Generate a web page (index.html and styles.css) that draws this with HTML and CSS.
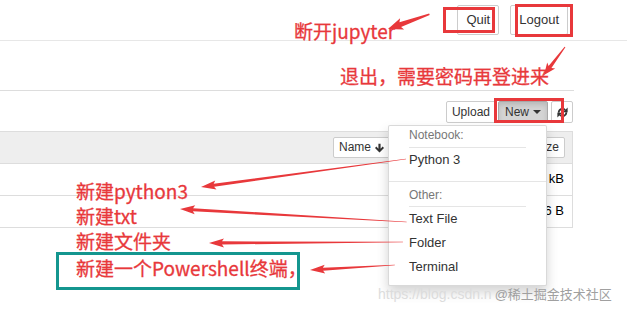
FILE: index.html
```html
<!DOCTYPE html>
<html lang="zh-CN">
<head>
    <meta charset="UTF-8">
    <meta name="viewport" content="width=device-width, initial-scale=1.0">
    <title>Jupyter - Home</title>
    <link rel="stylesheet" href="styles.css">
</head>
<body>
<div class="page">
    <!-- Top header -->
    <header class="topbar">
        <button class="btn">Quit</button>
        <button class="btn">Logout</button>
    </header>

    <!-- File tree -->
    <main class="tree">
        <div class="tabs"></div>

        <div class="toolbar">
            <button class="btn btn-xs upload-btn">Upload</button>
            <div class="btn-group">
                <button class="btn btn-xs btn-active">New <span class="caret"></span></button>
                <button class="btn btn-xs btn-icon">
                    <svg width="11" height="11" viewBox="0 0 12 12">
                        <path d="M1.8 6.2A4.2 4.2 0 0 1 9 3.3" fill="none" stroke="#333" stroke-width="1.9"/>
                        <polygon points="11.6,0.6 11.6,5.6 6.6,5.6" fill="#333"/>
                        <path d="M10.2 5.8A4.2 4.2 0 0 1 3 8.7" fill="none" stroke="#333" stroke-width="1.9"/>
                        <polygon points="0.4,11.4 0.4,6.4 5.4,6.4" fill="#333"/>
                    </svg>
                </button>
            </div>
        </div>

        <div class="file-list">
            <div class="list-head">
                <button class="btn btn-xs sort-btn">Name
                    <svg width="9" height="10" viewBox="0 0 10 10">
                        <path d="M3.8 0.4h2.4v5.3l2.3-2.3 1.5 1.5L5 9.9 0 4.9l1.5-1.5 2.3 2.3z" fill="#333"/>
                    </svg>
                </button>
                <span class="spacer"></span>
                <button class="btn btn-xs">File size</button>
            </div>
            <div class="list-row"><span>41.3 kB</span></div>
            <div class="list-row"><span>836 B</span></div>
        </div>
    </main>

    <!-- New dropdown, open -->
    <ul class="dropdown-menu">
        <li class="menu-header">Notebook:</li>
        <li class="divider inset"></li>
        <li class="menu-item">Python 3</li>
        <li class="divider"></li>
        <li class="menu-header">Other:</li>
        <li class="divider inset after-header"></li>
        <li class="menu-item">Text File</li>
        <li class="menu-item">Folder</li>
        <li class="menu-item">Terminal</li>
    </ul>

    <!-- Annotations -->
    <div class="mark mark-quit"></div>
    <div class="mark mark-logout"></div>
    <div class="mark mark-new"></div>

    <p class="note note-quit">断开jupyter</p>
    <p class="note note-logout">退出，需要密码再登进来</p>

    <div class="notes-left">
        <p class="note-line">新建python3</p>
        <p class="note-line">新建txt</p>
        <p class="note-line">新建文件夹</p>
        <div class="teal-box">
            <p class="note-line">新建一个Powershell终端，</p>
        </div>
    </div>

    <svg class="arrows" width="627" height="312">
        <g fill="#e8383b">
            <polygon transform="translate(388 29) rotate(-19.65)" points="0,0 15,-6 13,-2.4 44,-0.8 44,0.8 13,2.4 15,6"/>
            <polygon transform="translate(544 75) rotate(-53.1)" points="0,0 12,-5 10,-1.8 35,-0.5 35,0.5 10,1.8 12,5"/>
            <polygon transform="translate(201 187) rotate(-7.78)" points="0,0 15,-4.5 13,-1.6 207,-0.3 207,0.3 13,1.6 15,4.5"/>
            <polygon transform="translate(180 209) rotate(3.28)" points="0,0 15,-4.5 13,-1.6 227,-0.3 227,0.3 13,1.6 15,4.5"/>
            <polygon transform="translate(209 243) rotate(-0.3)" points="0,0 15,-4.5 13,-1.6 194,-0.3 194,0.3 13,1.6 15,4.5"/>
            <polygon transform="translate(310 270) rotate(-3.37)" points="0,0 15,-4.5 13,-1.6 85,-0.3 85,0.3 13,1.6 15,4.5"/>
        </g>
    </svg>

    <div class="watermark">
        <span class="wm-csdn">https://blog.csdn.n</span><span class="wm-juejin">@稀土掘金技术社区</span>
    </div>
</div>
</body>
</html>
```

FILE: styles.css
```css
/* General */
body {
    margin: 0;
    font-family: "Liberation Sans", Arial, sans-serif;
    font-size: 13px;
    color: #333;
    background-color: #fff;
}

.page {
    position: relative;
    width: 627px;
    height: 312px;
    overflow: hidden;
}

/* Buttons */
.btn {
    font-family: "Liberation Sans", Arial, sans-serif;
    font-size: 13px;
    color: #333;
    background-color: #fff;
    border: 1px solid #ccc;
    border-radius: 2px;
    height: 30px;
    line-height: 28px;
    padding: 0 8px;
    margin: 0;
    display: inline-flex;
    align-items: center;
    gap: 4px;
}

.btn-xs {
    font-size: 12px;
    height: 22px;
    line-height: 20px;
    padding: 0 5px;
}

.btn-active {
    background-color: #d4d4d4;
    border-color: #a8a8a8;
    box-shadow: inset 0 3px 5px rgba(0, 0, 0, 0.125);
    padding: 0 6px;
}

.btn-icon {
    width: 22px;
    justify-content: center;
    padding: 0;
}

.caret {
    display: inline-block;
    border-top: 4px solid #333;
    border-left: 4px solid transparent;
    border-right: 4px solid transparent;
}

/* Header */
.topbar {
    height: 35px;
    padding: 5px 59px 0 0;
    border-bottom: 1px solid #e7e7e7;
    display: flex;
    justify-content: flex-end;
    align-items: flex-start;
    gap: 11px;
}

/* Tree view */
.tree {
    width: 574px;
}

.tabs {
    height: 49px;
    border-bottom: 1px solid #ddd;
}

.toolbar {
    display: flex;
    justify-content: flex-end;
    padding: 10px 1px 0 0;
    gap: 2px;
}

.btn-group {
    display: flex;
    gap: 3px;
}

.file-list {
    width: 572px;
    margin-top: 8px;
    border-top: 1px solid #ddd;
    border-right: 1px solid #ddd;
}

.list-head {
    height: 26px;
    padding: 5px 7px 0 333px;
    background-color: #eee;
    border-bottom: 1px solid #ddd;
    display: flex;
    align-items: flex-start;
}

.list-head .btn {
    height: 21px;
    line-height: 19px;
}

.spacer {
    flex: 1;
}

.list-row {
    height: 31px;
    line-height: 29px;
    padding-right: 8px;
    text-align: right;
    color: #000;
    border-bottom: 1px solid #ddd;
}

/* Dropdown */
.dropdown-menu {
    position: absolute;
    left: 388px;
    top: 125px;
    width: 159px;
    box-sizing: border-box;
    margin: 0;
    padding: 0 0 6px;
    list-style: none;
    background-color: #fff;
    border: 1px solid rgba(0, 0, 0, 0.15);
    border-radius: 2px;
    box-shadow: 0 6px 12px rgba(0, 0, 0, 0.175);
}

.menu-header {
    font-size: 12px;
    line-height: 18px;
    padding: 0 20px;
    color: #777;
}

.menu-item {
    line-height: 24px;
    padding: 0 20px;
    color: #333;
}

.divider {
    height: 1px;
    margin: 9px 0 4px;
    background-color: #e5e5e5;
}

.divider.inset {
    margin: 3px 20px 0;
}

.divider.after-header {
    margin-top: 2px;
}

/* Annotations */
.mark {
    position: absolute;
    box-sizing: border-box;
    border: 3px solid #e8383b;
}

.mark-quit {
    left: 443px;
    top: 7px;
    width: 52px;
    height: 26px;
}

.mark-logout {
    left: 515px;
    top: 4px;
    width: 58px;
    height: 33px;
}

.mark-new {
    left: 494px;
    top: 98px;
    width: 70px;
    height: 25px;
}

.note,
.note-line {
    margin: 0;
    font-family: "Noto Sans CJK SC", sans-serif;
    font-size: 19px;
    color: #e8383b;
    -webkit-text-stroke: 0.3px #e8383b;
    white-space: nowrap;
}

.note {
    position: absolute;
    line-height: 19px;
}

.note-quit {
    left: 294px;
    top: 21px;
}

.note-logout {
    left: 340px;
    top: 66px;
}

.notes-left {
    position: absolute;
    left: 56px;
    top: 178px;
}

.note-line {
    line-height: 25px;
    padding-left: 20px;
}

.teal-box {
    width: 244px;
    box-sizing: border-box;
    margin-top: -1px;
    padding: 0 0 7px;
    border: 3px solid #14968f;
}

.teal-box .note-line {
    padding-left: 17px;
}

.arrows {
    position: absolute;
    left: 0;
    top: 0;
    pointer-events: none;
}

.watermark {
    position: absolute;
    left: 378px;
    top: 285px;
    line-height: 18px;
    white-space: nowrap;
}

.wm-csdn {
    font-size: 14px;
    color: #dcdcdc;
}

.wm-juejin {
    margin-left: 3px;
    font-family: "Liberation Sans", "Noto Sans CJK SC", sans-serif;
    font-size: 13px;
    color: #a0a0a0;
}
```
